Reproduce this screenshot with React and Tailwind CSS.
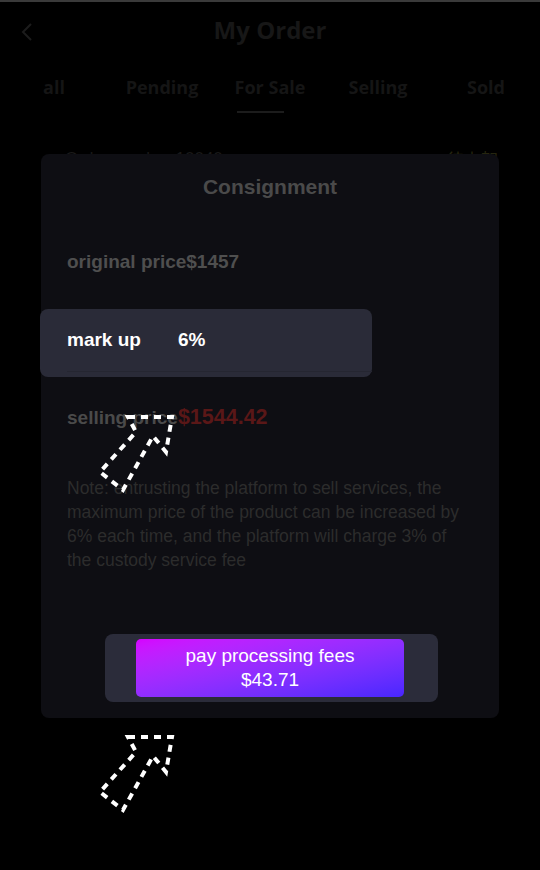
import React from 'react';

const tabs = ['all', 'Pending', 'For Sale', 'Selling', 'Sold'];

function DashedArrow({ className }) {
  return (
    <svg className={className} width="84" height="84" viewBox="0 0 84 84" fill="none">
      <polygon
        points="33,5 77,5 71,40 58,24 28,78 5,60 41,20"
        stroke="#fff"
        strokeWidth="4"
        strokeDasharray="7 6"
        strokeLinejoin="miter"
      />
    </svg>
  );
}

export default function App() {
  return (
    <div className="relative w-[540px] h-[870px] overflow-hidden bg-black border-t-2 border-[#3a3a3a] font-['Liberation_Sans',Arial,sans-serif]">
      {/* page behind the overlay */}
      <div className="relative h-[56px] flex items-center justify-center">
        <svg className="absolute left-[20px] top-[20px]" width="14" height="20" viewBox="0 0 14 20" fill="none">
          <path d="M11 2 L3 10 L11 18" stroke="#1c1c1c" strokeWidth="2" />
        </svg>
        <h1 className="font-['Open_Sans',sans-serif] font-bold text-[24px] text-[#171717]">My Order</h1>
      </div>
      <div className="grid grid-cols-5 mt-[11px]">
        {tabs.map((t) => (
          <div key={t} className="flex flex-col items-center">
            <span className="font-['Open_Sans',sans-serif] font-bold text-[18px] leading-[36px] text-[#151515]">{t}</span>
            {t === 'For Sale' && <div className="mt-[6px] mr-[19px] w-[47px] h-[2px] bg-[#1c1c1c]" />}
          </div>
        ))}
      </div>
      <div className="flex justify-between pl-[65px] pr-[42px] mt-[33px] text-[17px]">
        <span className="text-[#1a1a1a]">Order number 10040</span>
        <span className="text-[#26260f] font-['Noto_Sans_CJK_SC',sans-serif]">待上架</span>
      </div>

      {/* consignment dialog */}
      <div className="absolute left-[41px] top-[152px] w-[458px] h-[564px] rounded-[8px] bg-[#0e0e13]">
        <h2 className="mt-[19px] text-center font-bold text-[21px] leading-[28px] text-[#4a4a4a]">Consignment</h2>
        <p className="mt-[49px] pl-[26px] font-bold text-[19px] leading-[24px] text-[#4f4f4f]">original price$1457</p>
        <div className="mt-[35px] -ml-px w-[332px] h-[68px] rounded-[8px] bg-[#2a2b38]">
          <div className="ml-[27px] pt-[19px] pb-[19px] border-b border-[#252631] flex font-bold text-[19px] leading-[24px] text-white">
            <span className="w-[111px]">mark up</span>
            <span>6%</span>
          </div>
        </div>
        <p className="mt-[28px] pl-[26px] font-bold leading-[24px] flex items-baseline">
          <span className="text-[19px] text-[#4a4a4a]">selling price</span>
          <span className="text-[21.5px] text-[#5a1717]">$1544.42</span>
        </p>
        <p className="mt-[46px] pl-[26px] w-[432px] text-[17.5px] leading-[24px] text-[#2c2c2c]">
          Note: entrusting the platform to sell services, the maximum price of the product can be increased by 6% each time, and the platform will charge 3% of the custody service fee
        </p>
        <div className="mt-[62px] ml-[64px] w-[333px] h-[68px] rounded-[8px] bg-[#2b2c3a] flex items-center pl-[31px]">
          <button className="w-[268px] h-[58px] rounded-[5px] bg-linear-to-br from-[#d600ff] to-[#4826ff] text-white text-[19px] leading-[24px]">
            pay processing fees
            <br />
            $43.71
          </button>
        </div>
      </div>

      <DashedArrow className="absolute left-[95px] top-[410px]" />
      <DashedArrow className="absolute left-[95px] top-[730px]" />
    </div>
  );
}
